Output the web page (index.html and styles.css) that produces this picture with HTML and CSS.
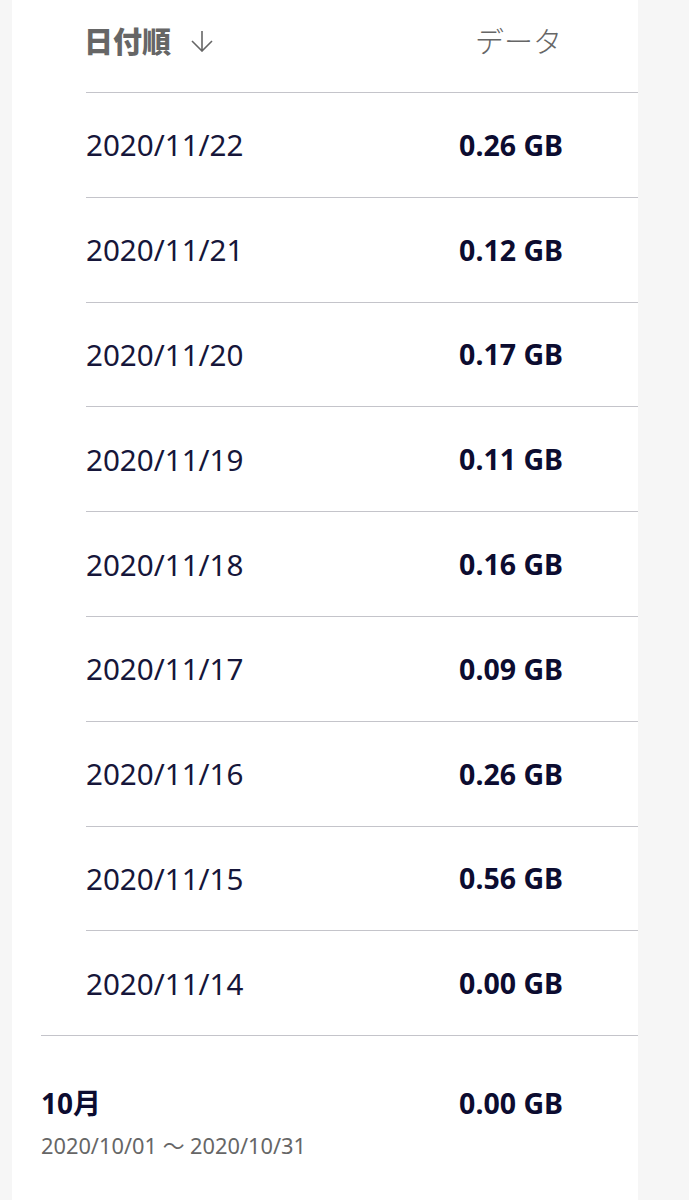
FILE: index.html
```html
<!DOCTYPE html>
<html lang="ja">
<head>
    <meta charset="UTF-8">
    <meta name="viewport" content="width=device-width, initial-scale=1.0">
    <title>データ使用量</title>
    <link rel="stylesheet" href="styles.css">
</head>
<body>
    <div class="panel">
        <div class="days">
            <div class="head">
                <span class="sort">日付順
                    <svg class="arrow" width="22" height="22" viewBox="0 0 22 22">
                        <path d="M11 1 V21 M1 11 L11 21 L21 11" fill="none" stroke="#666" stroke-width="1.6"/>
                    </svg>
                </span>
                <span class="col">データ</span>
            </div>
            <div class="row"><span class="date">2020/11/22</span><span class="amount">0.26 GB</span></div>
            <div class="row"><span class="date">2020/11/21</span><span class="amount">0.12 GB</span></div>
            <div class="row"><span class="date">2020/11/20</span><span class="amount">0.17 GB</span></div>
            <div class="row"><span class="date">2020/11/19</span><span class="amount">0.11 GB</span></div>
            <div class="row"><span class="date">2020/11/18</span><span class="amount">0.16 GB</span></div>
            <div class="row"><span class="date">2020/11/17</span><span class="amount">0.09 GB</span></div>
            <div class="row"><span class="date">2020/11/16</span><span class="amount">0.26 GB</span></div>
            <div class="row"><span class="date">2020/11/15</span><span class="amount">0.56 GB</span></div>
            <div class="row"><span class="date">2020/11/14</span><span class="amount">0.00 GB</span></div>
        </div>
        <div class="month">
            <div class="month-info">
                <div class="month-name">10月</div>
                <div class="range">2020/10/01 〜 2020/10/31</div>
            </div>
            <span class="amount">0.00 GB</span>
        </div>
    </div>
</body>
</html>
```

FILE: styles.css
```css
* {
    padding: 0;
    margin: 0;
    box-sizing: border-box;
    font-family: "Noto Sans", "Noto Sans CJK JP", sans-serif;
}
body {
    width: 100%;
    height: 1200px;
    overflow: hidden;
    background: #f6f6f6;
}
.panel {
    margin: 0 51px 0 12px;
    height: 1200px;
    padding-left: 29px;
    background: white;
}
.days {
    margin-left: 45px;
}
.head {
    height: 93px;
    padding-bottom: 12px;
    padding-right: 76px;
    display: flex;
    justify-content: space-between;
    align-items: center;
    color: #666;
    font-size: 29px;
    border-bottom: 1px solid #c4c4ca;
}
.sort {
    display: flex;
    align-items: center;
    gap: 20px;
    font-weight: 900;
    margin-left: -2px;
}
.arrow {
    margin-top: 2px;
}
.col {
    font-family: "Noto Sans CJK JP", sans-serif;
    font-weight: 300;
}
.row {
    height: 104.8px;
    padding-right: 75px;
    display: flex;
    justify-content: space-between;
    align-items: center;
    border-bottom: 1px solid #c4c4ca;
}
.date {
    font-size: 29.6px;
    color: #16163a;
}
.amount {
    font-size: 28.5px;
    font-weight: bold;
    color: #0c0c30;
}
.month {
    margin-top: -1px;
    border-top: 1px solid #c4c4ca;
    padding: 48px 75px 0 0;
    display: flex;
    justify-content: space-between;
    align-items: flex-start;
}
.month .amount {
    line-height: 39px;
}
.month-name {
    font-size: 28px;
    font-weight: bold;
    line-height: 39px;
    color: #0c0c30;
}
.range {
    margin-top: 7px;
    font-size: 21.8px;
    line-height: 31px;
    color: #666;
}
```
